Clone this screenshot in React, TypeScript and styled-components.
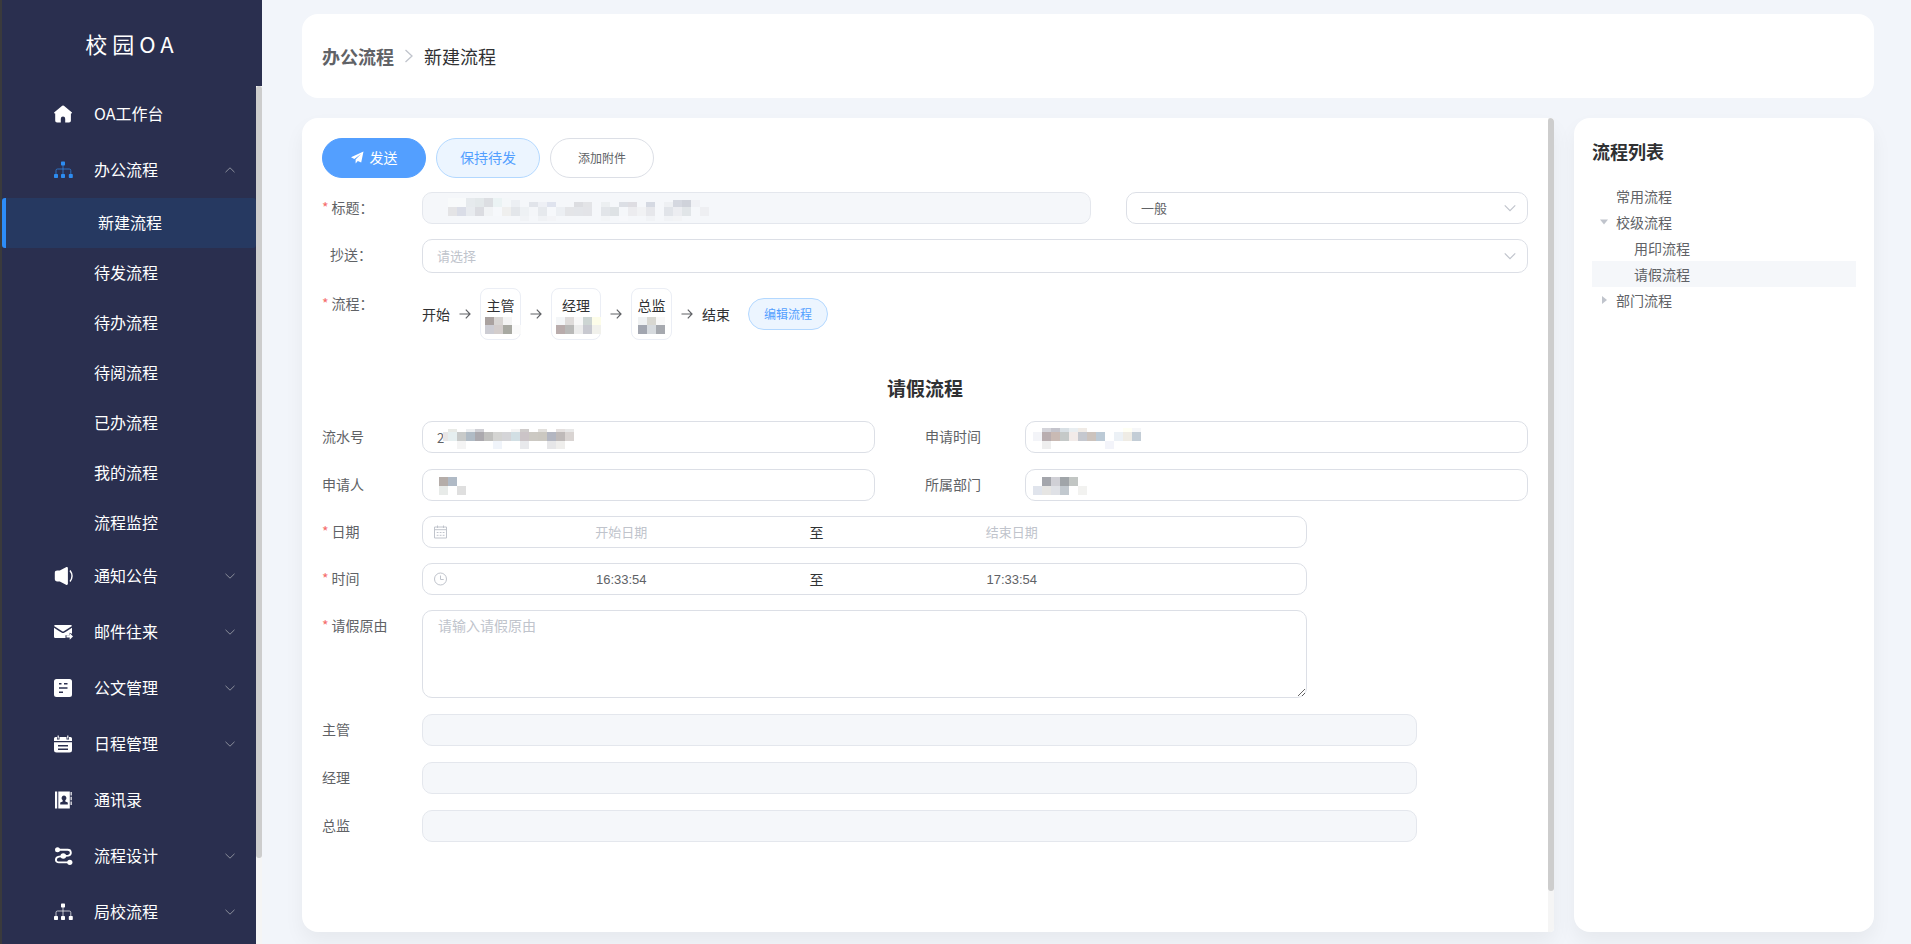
import React from "react";
import styled, { createGlobalStyle, css } from "styled-components";

const GlobalStyle = createGlobalStyle`
  *, *::before, *::after { box-sizing: border-box; }
  body {
    margin: 0;
    background: #f2f5fa;
    color: #303133;
    font-family: "Noto Sans CJK SC", sans-serif;
    font-size: 14px;
  }
  button, input, select, textarea { font-family: inherit; }
`;

/* ---------- shell ---------- */

const Shell = styled.div`
  display: flex;
  height: 100vh;
  overflow: hidden;
`;

const Sidebar = styled.aside`
  flex: 0 0 262px;
  display: flex;
  flex-direction: column;
  background: #2a2f4f;
  border-left: 2px solid #3a3a3c;
`;

const Brand = styled.h1`
  flex: none;
  display: flex;
  align-items: center;
  justify-content: center;
  height: 86px;
  margin: 0;
  color: #fff;
  font-size: 22px;
  font-weight: 400;
  letter-spacing: 5px;
`;

const SideBody = styled.div`
  flex: 1;
  min-height: 0;
  display: flex;
`;

const Nav = styled.nav`
  flex: 1;
  overflow: hidden;
`;

const Track = styled.div`
  flex: 0 0 6px;
  background: #f5f5f5;
`;

const Thumb = styled.div<{ $size: string }>`
  height: ${(p) => p.$size};
  border-radius: 3px;
  background: #cdcdcd;
`;

const NavLink = styled.a<{ $current?: boolean }>`
  display: flex;
  align-items: center;
  height: 56px;
  padding: 0 20px 0 52px;
  color: #fff;
  font-size: 16px;
  text-decoration: none;
  & > svg:first-child { color: ${(p) => (p.$current ? "#2d8cf0" : "#fff")}; }
`;

const NavText = styled.span`
  flex: 1;
  margin-left: 21px;
  padding-bottom: 2px;
`;

const SubLink = styled.a<{ $active?: boolean }>`
  display: flex;
  align-items: center;
  height: 50px;
  padding: 0 0 2px 92px;
  color: #fff;
  font-size: 16px;
  text-decoration: none;
  ${(p) =>
    p.$active &&
    css`
      background: #263961;
      border-left: 4px solid #2d8cf8;
      border-radius: 3px;
    `}
`;

const Main = styled.main`
  flex: 1;
  min-width: 0;
  display: flex;
  flex-direction: column;
  gap: 20px;
  padding: 14px 37px 12px 40px;
`;

const Crumbs = styled.nav`
  flex: none;
  display: flex;
  align-items: center;
  gap: 9px;
  height: 84px;
  padding: 0 20px;
  border-radius: 16px;
  background: #fff;
  color: #303133;
  font-size: 18px;
  a { color: #606266; font-weight: 700; text-decoration: none; }
`;

const Columns = styled.div`
  flex: 1;
  min-height: 0;
  display: flex;
  gap: 20px;
`;

const cardShadow = "0 10px 20px rgba(0, 0, 0, 0.05)";

const FormCard = styled.section`
  flex: 1;
  min-width: 0;
  display: flex;
  overflow: hidden;
  border-radius: 16px 4px 4px 16px;
  background: #fff;
  box-shadow: ${cardShadow};
`;

const FormBody = styled.form`
  flex: 1;
  min-width: 0;
  padding: 20px;
`;

const ListCard = styled.aside`
  flex: 0 0 300px;
  padding: 20px 18px;
  border-radius: 16px;
  background: #fff;
  box-shadow: ${cardShadow};
`;

/* ---------- buttons ---------- */

const Toolbar = styled.div`
  display: flex;
  gap: 10px;
  margin-bottom: 14px;
`;

const Button = styled.button<{ $tone: "solid" | "soft" | "plain"; $small?: boolean }>`
  display: flex;
  align-items: center;
  justify-content: center;
  gap: 6px;
  width: 104px;
  height: 40px;
  padding: 0 0 2px;
  border: 1px solid;
  border-radius: 20px;
  font-size: 14px;
  ${(p) =>
    p.$tone === "solid"
      ? css`background: #539fff; border-color: #539fff; color: #fff;`
      : p.$tone === "soft"
      ? css`background: #ecf5ff; border-color: #b3d8ff; color: #539fff;`
      : css`background: #fff; border-color: #dcdfe6; color: #606266; font-size: 12px;`}
  ${(p) =>
    p.$small &&
    css`
      width: 80px;
      height: 32px;
      border-radius: 16px;
      font-size: 12px;
      margin-left: 10px;
    `}
`;

/* ---------- form ---------- */

const Group = styled.div<{ $gap: number; $after?: number }>`
  display: flex;
  flex-direction: column;
  gap: ${(p) => p.$gap}px;
  margin-bottom: ${(p) => p.$after ?? 0}px;
`;

const Split = styled.div<{ $cols: string }>`
  display: grid;
  grid-template-columns: ${(p) => p.$cols};
`;

const Field = styled.div<{ $end?: number }>`
  display: flex;
  align-items: flex-start;
  min-width: 0;
  padding-right: ${(p) => p.$end ?? 0}px;
`;

const Label = styled.label<{ $required?: boolean; $indent?: boolean }>`
  flex: 0 0 100px;
  padding-left: ${(p) => (p.$indent ? 8 : 0)}px;
  color: #606266;
  font-size: 14px;
  line-height: 30px;
  ${(p) =>
    p.$required &&
    css`
      &::before { content: "*"; color: #f56c6c; margin-right: 3px; }
    `}
`;

const Control = styled.div<{ $width?: string }>`
  position: relative;
  flex: 0 1 auto;
  min-width: 0;
  width: ${(p) => p.$width ?? "100%"};
`;

const Rest = styled.div`
  flex: 1;
  min-width: 0;
`;

const boxed = css`
  display: block;
  width: 100%;
  border: 1px solid #dcdfe6;
  border-radius: 10px;
  background: #fff;
  color: #606266;
  outline: none;
  &::placeholder { color: #c0c4cc; opacity: 1; }
`;

const Input = styled.input`
  ${boxed}
  height: 32px;
  padding: 0 14px;
  font-size: 13px;
  &:disabled { background: #f5f7fa; border-color: #e4e7ed; }
`;

const Select = styled.select<{ $empty?: boolean }>`
  ${boxed}
  height: ${(p) => (p.$empty ? 34 : 32)}px;
  padding: 0 14px 2px;
  appearance: none;
  font-size: 13px;
  ${(p) => p.$empty && css`color: #c0c4cc;`}
`;

const SelectArrow = styled.span`
  position: absolute;
  top: 0;
  bottom: 0;
  right: 11px;
  display: flex;
  align-items: center;
  color: #c0c4cc;
  pointer-events: none;
`;

const Textarea = styled.textarea`
  ${boxed}
  height: 88px;
  padding: 4px 15px;
  resize: vertical;
  font-size: 14px;
  line-height: 21px;
`;

const Range = styled.div`
  ${boxed}
  display: flex;
  align-items: center;
  height: 32px;
  padding: 0 10px;
  svg { flex: none; color: #c0c4cc; }
`;

const RangeInput = styled.input`
  width: 39%;
  min-width: 0;
  padding: 0;
  border: 0;
  outline: none;
  background: none;
  color: #606266;
  font-family: "Liberation Sans", "Noto Sans CJK SC", sans-serif;
  font-size: 13px;
  text-align: center;
  &::placeholder { color: #c0c4cc; opacity: 1; }
`;

const RangeSep = styled.span`
  flex: none;
  width: 54px;
  color: #303133;
  text-align: center;
`;

const Flow = styled.div`
  display: flex;
  align-items: center;
  gap: 8px;
  color: #303133;
  white-space: nowrap;
`;

const FlowNode = styled.div<{ $wide?: boolean }>`
  display: flex;
  flex-direction: column;
  align-items: center;
  width: ${(p) => (p.$wide ? 50 : 41)}px;
  height: 52px;
  padding-top: 6px;
  border: 1px solid #ebeef5;
  border-radius: 8px;
  line-height: 20px;
  svg { overflow: visible; margin-top: 2px; }
`;

const FormTitle = styled.h3`
  margin: 35px 0 20px;
  color: #303133;
  font-size: 19px;
  line-height: 26px;
  text-align: center;
`;

/* ---------- process tree ---------- */

const ListTitle = styled.h3`
  margin: 0 0 19px;
  font-size: 18px;
  line-height: 26px;
`;

const Tree = styled.ul`
  margin: 0;
  padding: 0;
  list-style: none;
`;

const TreeRow = styled.button<{ $level: number; $active?: boolean }>`
  display: flex;
  align-items: center;
  width: 100%;
  height: 26px;
  padding: 0 0 0 ${(p) => 6 + p.$level * 18}px;
  border: 0;
  background: ${(p) => (p.$active ? "#f5f7fa" : "none")};
  color: #606266;
  font-size: 14px;
  svg, i { flex: none; width: 12px; margin-right: 6px; color: #c0c4cc; }
`;

/* ---------- masked values ---------- */

type MaskRow = { y: number; h: number; from?: number; c: string };

const Overlay = styled.svg`
  position: absolute;
  top: 0;
  left: 0;
  pointer-events: none;
`;

const cells = (rows: MaskRow[]) =>
  rows.flatMap((r, ri) =>
    r.c.split(" ").map((c, i) =>
      c === "-" ? null : (
        <rect key={`${ri}-${i}`} x={((r.from ?? 0) + i) * 9} y={r.y} width={9} height={r.h} fill={`#${c}`} />
      )
    )
  );

function Mask({ rows, x }: { rows: MaskRow[]; x: number }) {
  return (
    <Overlay width={320} height={32} shapeRendering="crispEdges" aria-hidden="true">
      <g transform={`translate(${x} 0)`}>{cells(rows)}</g>
    </Overlay>
  );
}

function NodeMask({ rows, width }: { rows: MaskRow[]; width: number }) {
  return (
    <svg width={width} height={18} shapeRendering="crispEdges" aria-hidden="true">
      {cells(rows)}
    </svg>
  );
}

const titleMask: MaskRow[] = [
  { y: 6, h: 9, c: "f8fafb f8fafb e6eaed e3e8ea dcdee2 ebf3f4 f4f7f9 -" },
  { y: 8, h: 7, from: 7, c: "eceff3" },
  { y: 10, h: 5, from: 9, c: "e1e4ea eef0f5 dfe3ee - - dcdde1 e3e4e7 - eceff1 - dcdfe5 dedde2 - d5d9e2 - eef0f3" },
  { y: 8, h: 7, from: 25, c: "d5d8e0 cfd2da f0f1f5" },
  {
    y: 15,
    h: 9,
    c: "e4e4e6 dadde7 e8ebef dbdce1 f1f3f5 f6f8fb efefee e3e6ea eef1f4 f4f6f9 e6e9ed f6f8fb eceff3 e4e5e8 e3e5e9 e3e4e8 - e2e5e9 dee2e5 f5f7fa ececef f1f2f4 e6e7eb - e1e4e9 ecedf1 e1e5e8 f5f7fa eeeff2",
  },
  { y: 24, h: 5, from: 8, c: "f1f3f6 - f0f2f5 f3f4f7 - - - - - f3f5f7 - f7f8fb - - f1f3f6 - f1f3f6 f3f4f6" },
];

const serialMask: MaskRow[] = [
  { y: 8, h: 3, c: "e8eae6 - eceef0 d0d0d5 - - - f4f4f4 cfcccb - e2e0dd - e4e0df e8e8e8" },
  { y: 11, h: 9, from: -0.6, c: "e8e6e6" },
  { y: 11, h: 9, c: "e6eff0 c8cac9 b0bbc5 aba9ae c0c0be d4d4d2 d5d5d8 d2dfe4 cbc4c7 ccc9c3 cbc8c1 b3b6c1 bfbab9 d9d4d2" },
  { y: 20, h: 8, from: 1, c: "f4f4f4 - - - f0f4fa - - e8e9ec - - e6e6e8 efeeec" },
];

const applicantMask: MaskRow[] = [
  { y: 8, h: 9, c: "b5ada9 b0bac6" },
  { y: 17, h: 9, c: "e8ebe9 - dfdfdf" },
];

const timeMask: MaskRow[] = [
  { y: 7, h: 4, c: "d4d4da c4c4cc d9e0e5 e9eef1 f0ebe6 - - - - fffff4 f6f7f9" },
  { y: 11, h: 9, from: -1, c: "f3f4f8 b9aeb0 c9bab4 c5c9c8 f2ebe9 c5c8cf ccc3bd bccad6 - ecf1f6 efece5 c3cdd6" },
  { y: 20, h: 8, c: "eeeeee - - - - - - f3f4fa" },
];

const deptMask: MaskRow[] = [
  { y: 8, h: 9, c: "a4a6ac d0d0d6 a0a5a9 c2c6c4" },
  { y: 17, h: 9, from: -1, c: "e0e4ec e6e5e3 dfe1e6 c2c9cf - f2f2f0" },
];

const headMask: MaskRow[] = [
  { y: 0, h: 8, c: "aaa2a0 d8d5d3 f4f4f4" },
  { y: 8, h: 9, c: "ccccd3 d3cdcc a8a9a2 fafafa" },
];
const managerMask: MaskRow[] = [
  { y: 0, h: 8, c: "f4f6f8 dedbda f8f8f8 cdd5d3 fdfde9" },
  { y: 8, h: 9, c: "b9acac b9b9b8 ececec c8c9d0 f1f1ec" },
];
const directorMask: MaskRow[] = [
  { y: 0, h: 8, c: "eff1f2 d8d7d1 f8f8f8" },
  { y: 8, h: 9, c: "a2a6b0 d6dade a6a9af" },
];

/* ---------- icons ---------- */

const Icon = ({ children }: { children: React.ReactNode }) => (
  <svg width="19" height="18" viewBox="0 0 19 18" fill="currentColor" aria-hidden="true">
    {children}
  </svg>
);

const HomeIcon = () => (
  <Icon>
    <path d="M8.2.8a1.3 1.3 0 0 1 1.7 0l7.8 6.4c.6.5.3 1.3-.4 1.3h-.4v7c0 1.2-.7 2-1.9 2h-3.800v-3.800a2.200 2.200 0 0 0-4.400 0v3.800H3.100c-1.200 0-1.900-.8-1.900-2v-7H.8c-.7 0-1-.8-.4-1.300z" />
  </Icon>
);
const TreeIcon = () => (
  <Icon>
    <rect x="7" y="0.5" width="4" height="4" rx=".7" />
    <rect x="0" y="13" width="4" height="4" rx=".7" />
    <rect x="7" y="13" width="4" height="4" rx=".7" />
    <rect x="14.8" y="13" width="4" height="4" rx=".7" />
    <path d="M9 4v9M2 13V9.500q0-1.500 1.500-1.500h11.800q1.500 0 1.500 1.500V13" fill="none" stroke="currentColor" strokeOpacity=".7" />
  </Icon>
);
const SpeakerIcon = () => (
  <Icon>
    <path d="M3.200 3.600h2.600L12 .3c1-.5 1.900 0 1.900 1v15.400c0 1-.9 1.500-1.900 1l-6.200-3.300H3.200C1.700 14.400.8 13.600.8 12V6c0-1.600.9-2.400 2.400-2.400z" />
    <path d="M16 3.500c2.600 3.500 2.600 7.500 0 11" fill="none" stroke="currentColor" strokeWidth="1.400" />
  </Icon>
);
const MailIcon = () => (
  <Icon>
    <path d="M.8 2h16.400l.8.900-8.200 5.300a1.500 1.500 0 0 1-1.600 0L0 2.900z" />
    <path d="M0 4.700 5.300 8.200l3 1.700a1.500 1.500 0 0 0 1.400 0l3-1.700L18 4.700v6l-2.500-1v2.500H11.500v2.800H1.200Q0 15 0 13.800z" />
    <path d="M12.500 12.300h3.200V10l3.300 3.400-3.300 3.400v-2.300h-3.200z" />
  </Icon>
);
const DocIcon = () => (
  <Icon>
    <path fillRule="evenodd" d="M2.500 0h13Q18 0 18 2.500v13q0 2.500-2.500 2.500h-13Q0 18 0 15.500v-13Q0 0 2.500 0zM5 4v1.400h2.500V4zm5 0v1.400h3.500V4zM5 8.300v1.400h8.500V8.300zm0 4.300V14h4v-1.400z" />
  </Icon>
);
const CalendarIcon = () => (
  <Icon>
    <path d="M0 6V3.500Q0 2 1.500 2H3v2.500h2.500V2h7v2.500H15V2h1.500Q18 2 18 3.500V6z" />
    <path fillRule="evenodd" d="M0 7.300h18V15q0 2.500-2.500 2.500h-13Q0 17.500 0 15zM4 10v1.400h10V10zm0 3.500v1.400h10v-1.400z" />
    <path d="M4.200.5v3M13.800.5v3" stroke="currentColor" strokeWidth="1.200" />
  </Icon>
);
const ContactsIcon = () => (
  <Icon>
    <rect x="1" y=".5" width="2.200" height="17" />
    <path fillRule="evenodd" d="M4.300.5h11.500v17H4.300zM10 4.600a2.500 2.500 0 0 0-1.300 4.600v1.200l-2.500 1.200v1.900h7.600v-1.900l-2.500-1.200V9.200A2.500 2.500 0 0 0 10 4.600z" />
    <path d="M16.400 1H18v3.500h-1.600zM16.400 5.700H18v3.500h-1.600zM16.400 10.400H18v3.500h-1.600z" opacity=".75" />
  </Icon>
);
const RouteIcon = () => (
  <Icon>
    <path d="M3.500 2.800h10.200c3.800 0 4.300 5 .6 5.800L5 9.600c-4 .6-4.200 5.800 0 5.800h10.500" fill="none" stroke="currentColor" strokeWidth="1.900" />
    <circle cx="3.500" cy="2.800" r="2.500" />
    <circle cx="9.300" cy="9" r="2.800" />
    <circle cx="15.800" cy="15.300" r="2.600" />
  </Icon>
);

const Chevron = ({ up, size = 12 }: { up?: boolean; size?: number }) => (
  <svg width={size} height={size} viewBox="0 0 12 12" fill="none" stroke="currentColor" strokeWidth="1" aria-hidden="true">
    <path d={up ? "M1.500 8.200 6 3.800l4.500 4.400" : "M1.500 3.800 6 8.200l4.500-4.400"} />
  </svg>
);

const NavChevron = styled.span`
  display: flex;
  color: #8b8f9c;
`;

const CrumbArrow = () => (
  <svg width="12" height="16" viewBox="0 0 12 16" fill="none" stroke="#c0c4cc" strokeWidth="1.300" aria-hidden="true">
    <path d="M2.500 2 9 8l-6.500 6" />
  </svg>
);

const PlaneIcon = () => (
  <svg width="13" height="13" viewBox="0 0 13 13" fill="#fff" aria-hidden="true">
    <path d="M12.500.5 0 6.300l3.300 1.600L10 3 4.600 8.600v3.900l2.200-2.600 3.400 1.700z" />
  </svg>
);

const ArrowIcon = () => (
  <svg width="14" height="14" viewBox="0 0 14 14" fill="none" stroke="#606266" strokeWidth="1.200" aria-hidden="true">
    <path d="M1.500 7h10.500M7.800 2.700 12 7l-4.200 4.300" />
  </svg>
);

const DateIcon = () => (
  <svg width="20" height="14" viewBox="0 0 20 14" fill="none" stroke="currentColor" aria-hidden="true">
    <path d="M1.500 2h12v11h-12zM1.500 4.700h12M4.500.5v2.500M10.500.5v2.500" />
    <path d="M3.700 7.500h7.800M3.700 10.300h7.800" strokeDasharray="1.800 1.200" />
  </svg>
);
const ClockIcon = () => (
  <svg width="20" height="14" viewBox="0 0 20 14" fill="none" stroke="currentColor" aria-hidden="true">
    <circle cx="7.500" cy="7" r="6" />
    <path d="M7.500 3.500V7.500h3.200" />
  </svg>
);

const Caret = ({ open }: { open?: boolean }) => (
  <svg width="12" height="12" viewBox="0 0 12 12" fill="currentColor" aria-hidden="true">
    <path d={open ? "M2 3.500h8L6 8.500z" : "M4 2l5 4-5 4z"} />
  </svg>
);

/* ---------- data ---------- */

type NavItem = { text: string; icon: () => React.ReactElement; leaf?: boolean; children?: string[] };

const navItems: NavItem[] = [
  { text: "OA工作台", icon: HomeIcon, leaf: true },
  {
    text: "办公流程",
    icon: TreeIcon,
    children: ["新建流程", "待发流程", "待办流程", "待阅流程", "已办流程", "我的流程", "流程监控"],
  },
  { text: "通知公告", icon: SpeakerIcon },
  { text: "邮件往来", icon: MailIcon },
  { text: "公文管理", icon: DocIcon },
  { text: "日程管理", icon: CalendarIcon },
  { text: "通讯录", icon: ContactsIcon, leaf: true },
  { text: "流程设计", icon: RouteIcon },
  { text: "局校流程", icon: TreeIcon },
];

const treeItems = [
  { text: "常用流程", level: 0 },
  { text: "校级流程", level: 0, caret: "open" },
  { text: "用印流程", level: 1 },
  { text: "请假流程", level: 1, active: true },
  { text: "部门流程", level: 0, caret: "closed" },
];

const approvals = [
  { id: "head", text: "主管" },
  { id: "manager", text: "经理" },
  { id: "director", text: "总监" },
];

export default function App() {
  return (
    <Shell>
      <GlobalStyle />
      <Sidebar>
        <Brand>校园OA</Brand>
        <SideBody>
          <Nav>
            {navItems.map(({ text, icon: ItemIcon, leaf, children }) => (
              <React.Fragment key={text}>
                <NavLink href="#" $current={!!children}>
                  <ItemIcon />
                  <NavText>{text}</NavText>
                  {!leaf && (
                    <NavChevron>
                      <Chevron up={!!children} />
                    </NavChevron>
                  )}
                </NavLink>
                {children?.map((child, i) => (
                  <SubLink href="#" key={child} $active={i === 0}>
                    {child}
                  </SubLink>
                ))}
              </React.Fragment>
            ))}
          </Nav>
          <Track>
            <Thumb $size="90%" />
          </Track>
        </SideBody>
      </Sidebar>

      <Main>
        <Crumbs>
          <a href="#">办公流程</a>
          <CrumbArrow />
          <span>新建流程</span>
        </Crumbs>

        <Columns>
          <FormCard>
            <FormBody onSubmit={(e) => e.preventDefault()}>
              <Toolbar>
                <Button type="submit" $tone="solid">
                  <PlaneIcon />
                  发送
                </Button>
                <Button type="button" $tone="soft">保持待发</Button>
                <Button type="button" $tone="plain">添加附件</Button>
              </Toolbar>

              <Group $gap={15}>
                <Split $cols="2fr 1fr">
                  <Field $end={35}>
                    <Label htmlFor="title" $required>标题：</Label>
                    <Control>
                      <Input id="title" disabled />
                      <Mask rows={titleMask} x={26} />
                    </Control>
                  </Field>
                  <Control>
                    <Select aria-label="紧急程度" defaultValue="normal">
                      <option value="normal">一般</option>
                    </Select>
                    <SelectArrow><Chevron size={14} /></SelectArrow>
                  </Control>
                </Split>
                <Field>
                  <Label htmlFor="cc" $indent>抄送：</Label>
                  <Control>
                    <Select id="cc" $empty defaultValue="">
                      <option value="">请选择</option>
                    </Select>
                    <SelectArrow><Chevron size={14} /></SelectArrow>
                  </Control>
                </Field>
                <Field>
                  <Label as="span" $required>流程：</Label>
                  <Flow>
                    <span>开始</span>
                    <ArrowIcon />
                    <FlowNode>主管<NodeMask rows={headMask} width={32} /></FlowNode>
                    <ArrowIcon />
                    <FlowNode $wide>经理<NodeMask rows={managerMask} width={40} /></FlowNode>
                    <ArrowIcon />
                    <FlowNode>总监<NodeMask rows={directorMask} width={28} /></FlowNode>
                    <ArrowIcon />
                    <span>结束</span>
                    <Button type="button" $tone="soft" $small>编辑流程</Button>
                  </Flow>
                </Field>
              </Group>

              <FormTitle>请假流程</FormTitle>

              <Group $gap={16} $after={15}>
                <Split $cols="1fr 1fr">
                  <Field $end={50}>
                    <Label htmlFor="serial">流水号</Label>
                    <Control>
                      <Input id="serial" defaultValue="2" />
                      <Mask rows={serialMask} x={26} />
                    </Control>
                  </Field>
                  <Field>
                    <Label htmlFor="applied">申请时间</Label>
                    <Control>
                      <Input id="applied" />
                      <Mask rows={timeMask} x={17} />
                    </Control>
                  </Field>
                </Split>
                <Split $cols="1fr 1fr">
                  <Field $end={50}>
                    <Label htmlFor="applicant">申请人</Label>
                    <Control>
                      <Input id="applicant" />
                      <Mask rows={applicantMask} x={17} />
                    </Control>
                  </Field>
                  <Field>
                    <Label htmlFor="dept">所属部门</Label>
                    <Control>
                      <Input id="dept" />
                      <Mask rows={deptMask} x={17} />
                    </Control>
                  </Field>
                </Split>
              </Group>

              <Group $gap={15} $after={16}>
                <Field>
                  <Label htmlFor="date" $required>日期</Label>
                  <Rest>
                    <Control $width="80%">
                      <Range>
                        <DateIcon />
                        <RangeInput id="date" placeholder="开始日期" />
                        <RangeSep>至</RangeSep>
                        <RangeInput aria-label="结束日期" placeholder="结束日期" />
                      </Range>
                    </Control>
                  </Rest>
                </Field>
                <Field>
                  <Label htmlFor="time" $required>时间</Label>
                  <Rest>
                    <Control $width="80%">
                      <Range>
                        <ClockIcon />
                        <RangeInput id="time" defaultValue="16:33:54" />
                        <RangeSep>至</RangeSep>
                        <RangeInput aria-label="结束时间" defaultValue="17:33:54" />
                      </Range>
                    </Control>
                  </Rest>
                </Field>
                <Field>
                  <Label htmlFor="reason" $required>请假原由</Label>
                  <Rest>
                    <Control $width="80%">
                      <Textarea id="reason" placeholder="请输入请假原由" />
                    </Control>
                  </Rest>
                </Field>
              </Group>

              <Group $gap={16}>
                {approvals.map((a) => (
                  <Field key={a.id}>
                    <Label htmlFor={a.id}>{a.text}</Label>
                    <Rest>
                      <Control $width="90%">
                        <Input id={a.id} disabled />
                      </Control>
                    </Rest>
                  </Field>
                ))}
              </Group>
            </FormBody>
            <Track>
              <Thumb $size="95%" />
            </Track>
          </FormCard>

          <ListCard>
            <ListTitle>流程列表</ListTitle>
            <Tree>
              {treeItems.map((t) => (
                <li key={t.text}>
                  <TreeRow type="button" $level={t.level} $active={t.active}>
                    {t.caret ? <Caret open={t.caret === "open"} /> : <i />}
                    {t.text}
                  </TreeRow>
                </li>
              ))}
            </Tree>
          </ListCard>
        </Columns>
      </Main>
    </Shell>
  );
}
